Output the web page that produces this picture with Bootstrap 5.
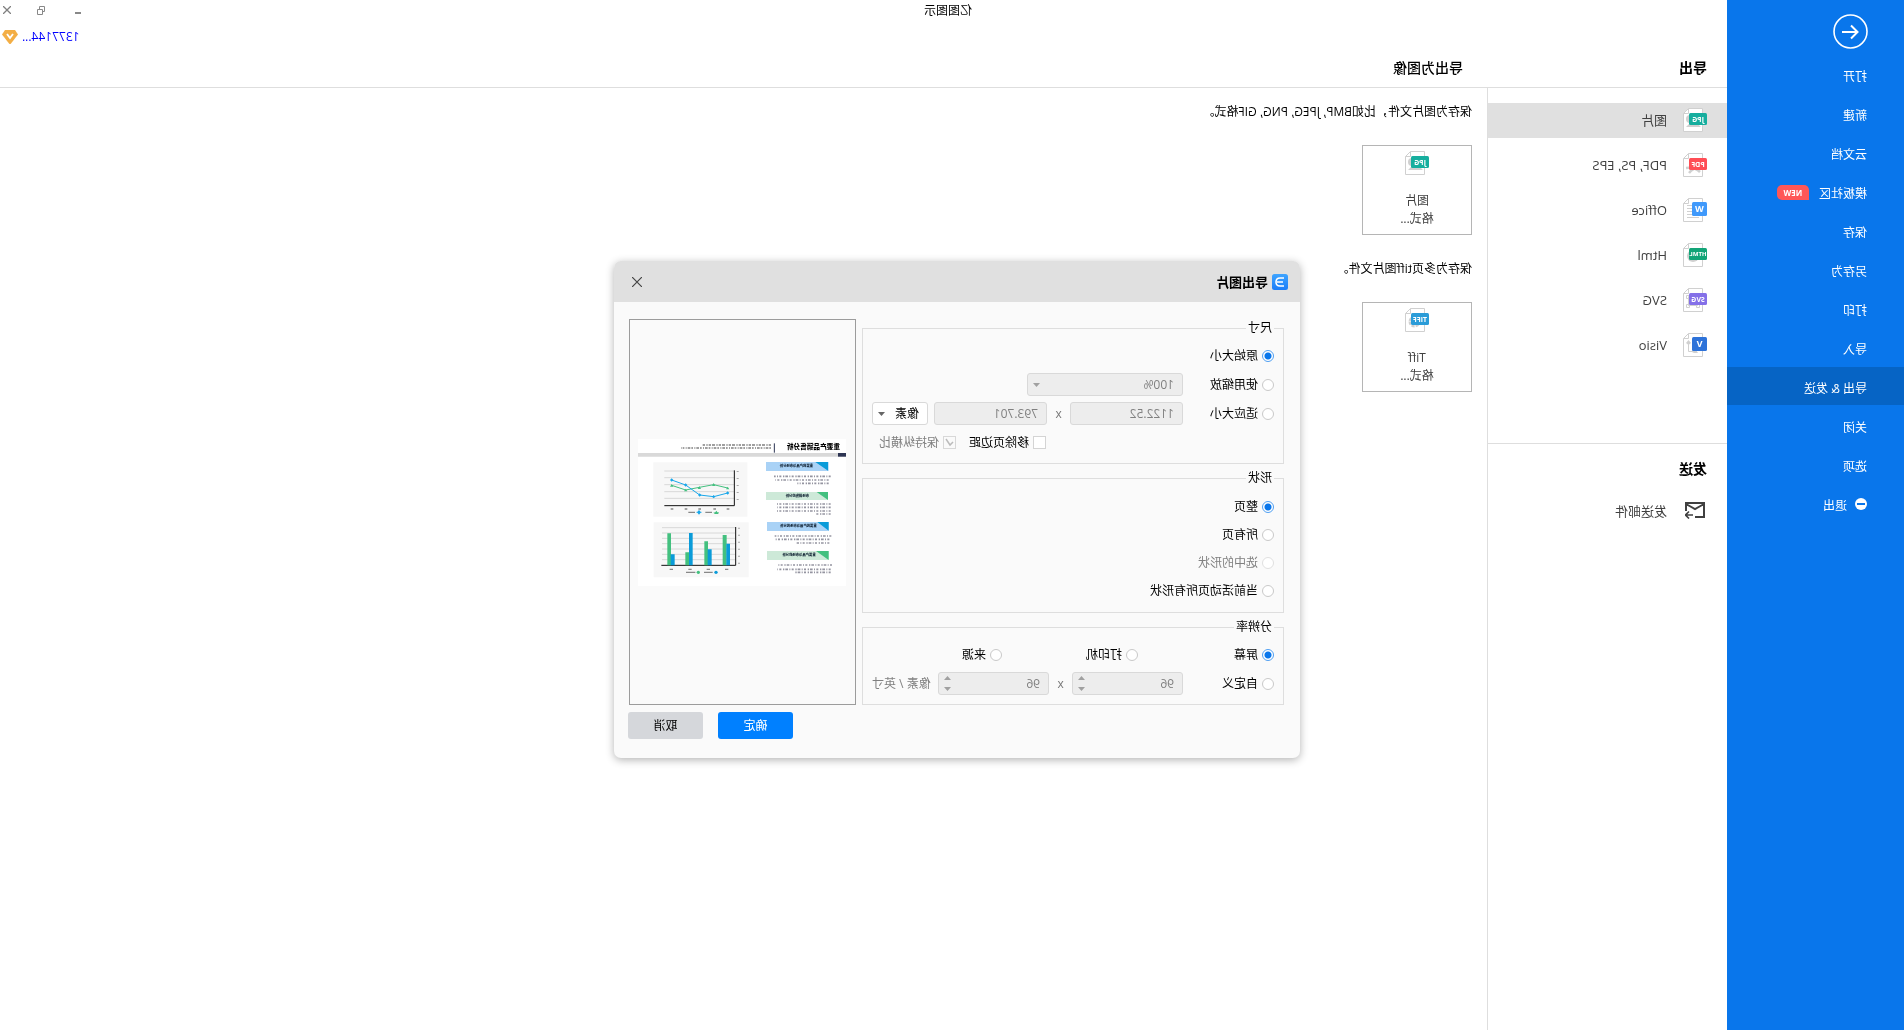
<!DOCTYPE html>
<html lang="zh-CN">
<head>
<meta charset="utf-8">
<meta name="viewport" content="width=device-width, initial-scale=1">
<title>亿图图示</title>
<link href="https://cdn.jsdelivr.net/npm/bootstrap@5.3.0/dist/css/bootstrap.min.css" rel="stylesheet">
<style>
body{font-family:"Open Sans","Noto Sans CJK SC",sans-serif;font-size:12px;line-height:18px;color:#000;background:#fff;overflow-x:hidden}
/* the whole window is shown mirrored */
.window{transform:scaleX(-1);position:relative;min-height:100vh}
.side{width:177px;background:#0976eb;padding-top:14px}
.back{width:35px;height:35px;margin:0 0 6px 36px}
.side a{height:38px;margin-bottom:1px;padding:5px 0 0 37px;color:#fff;text-decoration:none}
.side a.current{background:#0664c5}
.new-tag{font-size:8px;line-height:15px;width:32px;margin:0 0 2px 10px;background:#ff5757;border-radius:5px 5px 5px 0;text-align:center;font-weight:700}
.titlebar{height:20px}
.win-title{padding-top:1px}
.controls{width:169px;padding-right:3px;gap:26px}
.controls svg,.user svg,.back svg,.dlg-head svg{display:block}
.user{height:34px;padding-right:2px}
.user a{color:#00f;text-decoration:none}
.heads{height:34px;padding-bottom:5px;border-bottom:1px solid #dedede;font-size:14px;font-weight:700}
.heads span:first-child{width:264px;padding-left:20px}
.heads span:last-child{font-weight:500}
.formats{width:240px;border-right:1px solid #dedede;padding-top:15px}
.formats a{height:35px;margin-bottom:10px;padding:0 0 2px 20px;gap:16px;font-size:13px;color:#404040;text-decoration:none}
.formats a.current{background:#e0e0e0}
.send{margin-top:80px;border-top:1px solid #dedede;padding-top:15px}
.send h2{font-size:14px;line-height:20px;font-weight:700;margin:0 0 15px 20px}
.send a svg{margin:0 2px}
.content-pane{padding:15px}
.content-pane p{margin:0 0 24px}
.tile{width:110px;height:90px;padding:5px 0 0;border:1px solid #b5b5b5;background:#fff;color:#404040;margin-bottom:25px}
.tile svg{margin-bottom:17px}
.dlg{position:absolute;left:604px;top:261px;width:686px;background:#fafafa;border-radius:7px;box-shadow:0 2px 8px rgba(0,0,0,.3)}
.dlg-head{height:41px;background:#e0e0e0;border-radius:7px 7px 0 0;padding:0 18px 0 12px;font-size:13px;font-weight:700}
.dlg-body{padding:17px 15px 0 16px;gap:6px}
.groups{gap:5px}
.groups fieldset{border:1px solid #dedede;padding:4px 9px 6px}
.groups legend{float:none;width:auto;margin:0;padding:0 2px;font-size:12px;line-height:18px}
.line{height:29px}
.shapes .line{height:28px}
.groups .shapes{padding:6px 9px 7px}
.pick{gap:4px}
.col-label{width:91px}
.col-radio{width:136px}
.times{width:23px;text-align:center;color:#777}
.pick input{appearance:none;width:12px;height:12px;margin:0;border:1px solid #c9c9c9;background:#fff;flex:none}
.pick input[type=radio]{border-radius:50%}
.pick input[type=radio]:checked{border-color:#4f9ff2;background:radial-gradient(circle,#0976eb 0 3px,#fff 4px)}
.pick input[type=checkbox]{width:13px;height:13px}
.pick input[type=checkbox]:enabled{border-color:#d4d4d4}
.pick input:disabled{border-color:#e0e0e0}
.pick input[type=checkbox]:disabled{border-color:#d8d8d8;background:#fafafa url("data:image/svg+xml,%3Csvg xmlns='http://www.w3.org/2000/svg' viewBox='0 0 11 11'%3E%3Cpath d='M2 5l3 3 4-6' fill='none' stroke='%23bbb' stroke-width='1.5'/%3E%3C/svg%3E")}
.dim{color:#808080}
.field{appearance:none;height:23px;padding:0 8px;border:1px solid #d9d9d9;border-radius:3px;background:#fff no-repeat right 5px center;font-size:12px;line-height:18px;color:#000}
.field:disabled{background-color:#ededed;color:#808080;opacity:1}
input[type=number].field{appearance:textfield;-moz-appearance:textfield}
select.field{background-image:url("data:image/svg+xml,%3Csvg xmlns='http://www.w3.org/2000/svg' width='7' height='4'%3E%3Cpath d='M0 0h7L3.500 4z' fill='%23666'/%3E%3C/svg%3E")}
select.field:disabled{background-image:url("data:image/svg+xml,%3Csvg xmlns='http://www.w3.org/2000/svg' width='7' height='4'%3E%3Cpath d='M0 0h7L3.500 4z' fill='%23a0a0a0'/%3E%3C/svg%3E")}
.spin{background-image:url("data:image/svg+xml,%3Csvg xmlns='http://www.w3.org/2000/svg' width='7' height='15'%3E%3Cpath d='M0 4h7L3.500 0zM0 11h7L3.500 15z' fill='%23a0a0a0'/%3E%3C/svg%3E")}
.w-scale{width:156px}.w-size{width:113px}.w-unit{width:56px}.w-dpi{width:111px}
.ratio-line{padding-left:228px;gap:13px}
.preview{width:227px;border:1px solid #9c9c9c}
.preview svg{width:208px;height:147px}
.dlg-foot{padding:7px 14px 19px;gap:15px}
.dlg-foot button{width:75px;height:27px;border:0;border-radius:3px;background:#d5d7db;color:#000}
.dlg-foot .ok{background:#0080ff;color:#fff}
.bare{border:0;background:none;padding:0}
.tag{font:700 7px "Open Sans",sans-serif;fill:#fff;text-anchor:middle}
.tag-app{font-size:9px}
.tag-long{font-size:6px}
.doc-title{font:900 20px "Noto Sans CJK SC",sans-serif}
.doc-head{font:900 10px "Noto Sans CJK SC",sans-serif;fill:#123}
</style>
<script src="https://cdn.jsdelivr.net/npm/bootstrap@5.3.0/dist/js/bootstrap.bundle.min.js"></script>
</head>
<body>
<svg width="0" height="0" class="d-block position-absolute" aria-hidden="true">
  <symbol id="page" viewBox="0 0 24 24"><path d="M4.500.500h14l5 5v18h-19z" fill="#fff" stroke="#d0d0d0"/><path d="M18.500.500v5h5" fill="none" stroke="#d0d0d0"/></symbol>
</svg>
<div class="window d-flex">
  <nav class="side flex-shrink-0 d-flex flex-column">
    <button class="back bare" aria-label="返回"><svg width="35" height="35" fill="none" stroke="#fff" stroke-width="1.600"><circle cx="17.500" cy="17.500" r="16.500"/><path d="M26 18H10.500M17 11.500L10.500 18l6.500 6.500" stroke-width="2"/></svg></button>
    <a href="#" class="d-flex align-items-center">打开</a>
    <a href="#" class="d-flex align-items-center">新建</a>
    <a href="#" class="d-flex align-items-center">云文档</a>
    <a href="#" class="d-flex align-items-center">模板社区<span class="new-tag">NEW</span></a>
    <a href="#" class="d-flex align-items-center">保存</a>
    <a href="#" class="d-flex align-items-center">另存为</a>
    <a href="#" class="d-flex align-items-center">打印</a>
    <a href="#" class="d-flex align-items-center">导入</a>
    <a href="#" class="d-flex align-items-center current">导出 &amp; 发送</a>
    <a href="#" class="d-flex align-items-center">关闭</a>
    <a href="#" class="d-flex align-items-center">选项</a>
    <a href="#" class="d-flex align-items-center"><svg width="12" height="12" class="me-2 mb-1"><circle cx="6" cy="6" r="6" fill="#fff"/><path d="M2 6h8" stroke="#0976eb" stroke-width="2"/></svg>退出</a>
  </nav>
  <div class="flex-grow-1 d-flex flex-column">
    <header>
      <div class="titlebar d-flex align-items-center">
        <div class="win-title flex-grow-1 text-center">亿图图示</div>
        <div class="controls d-flex justify-content-end align-items-center">
          <button class="bare me-1" aria-label="最小化"><svg width="6" height="10"><path d="M0 8h6" stroke="#888" stroke-width="2"/></svg></button>
          <button class="bare" aria-label="还原"><svg width="8" height="9" fill="none" stroke="#888"><path d="M2 5.500H.500v-5h5V3M2.500 3.500h5v5h-5z"/></svg></button>
          <button class="bare" aria-label="关闭"><svg width="8" height="8" stroke="#808080" stroke-width="1.300"><path d="M0 0l8 8M8 0L0 8"/></svg></button>
        </div>
      </div>
      <div class="user d-flex justify-content-end align-items-center">
        <a href="#">1377144...</a>
        <svg width="16" height="14" class="ms-1"><path d="M3 0h10l3 4.500L9 13.500q-1 1-2 0L0 4.500z" fill="#f3ae45"/><path d="M5 4l3 4 3-4" fill="none" stroke="#fff" stroke-width="1.800"/></svg>
      </div>
      <div class="heads d-flex align-items-center"><span>导出</span><span>导出为图像</span></div>
    </header>
    <div class="d-flex flex-grow-1">
      <aside class="formats flex-shrink-0">
        <nav>
          <a href="#" class="d-flex align-items-center current"><svg width="24" height="24"><use href="#page"/><path d="M6 19l5-5 3 3 3-2 4 4z" fill="#d0d0d0"/><circle cx="17" cy="11" r="4" fill="#d0d0d0"/><rect y="5" width="18" height="12" rx="1.500" fill="#16ae9e"/><text class="tag" x="9" y="14">JPG</text></svg>图片</a>
          <a href="#" class="d-flex align-items-center"><svg width="24" height="24"><use href="#page"/><path d="M7 19q5-5 14-4M10 15q4 0 8 5" fill="none" stroke="#d0d0d0" stroke-width="2.500"/><rect y="5" width="18" height="12" rx="1.500" fill="#ff4d55"/><text class="tag" x="9" y="14">PDF</text></svg>PDF, PS, EPS</a>
          <a href="#" class="d-flex align-items-center"><svg width="24" height="24"><use href="#page"/><path d="M13 7.500h7M13 10.500h7M13 13.500h7M8 16.500h12M8 19.500h12" stroke="#d0d0d0"/><rect y="4" width="15" height="14" rx="1.500" fill="#3f99fb"/><text class="tag tag-app" x="7.500" y="14">W</text></svg>Office</a>
          <a href="#" class="d-flex align-items-center"><svg width="24" height="24"><use href="#page"/><circle cx="14" cy="13" r="6" fill="#d0d0d0"/><rect y="5" width="18" height="12" rx="1.500" fill="#12a477"/><text class="tag tag-long" x="9" y="13">HTML</text></svg>Html</a>
          <a href="#" class="d-flex align-items-center"><svg width="24" height="24"><use href="#page"/><path d="M9.500 8.500h9v9h-9zM7.500 16.500h3v3h-3zM17.500 16.500h3v3h-3zM17.500 7.500h3v3h-3z" fill="none" stroke="#d0d0d0"/><rect y="5" width="18" height="12" rx="1.500" fill="#8470e8"/><text class="tag" x="9" y="14">SVG</text></svg>SVG</a>
          <a href="#" class="d-flex align-items-center"><svg width="24" height="24"><use href="#page"/><path d="M18.500 9v9.500H12" fill="none" stroke="#d0d0d0"/><path d="M18.500 7l2.500 3-2.500 2-2.500-2zM13 16l3 2.500-3 1.500h-4l2-3z" fill="#d0d0d0"/><rect y="4" width="15" height="14" rx="1.500" fill="#2d72d9"/><text class="tag tag-app" x="7.500" y="14">V</text></svg>Visio</a>
        </nav>
        <section class="send">
          <h2>发送</h2>
          <a href="#" class="d-flex align-items-center"><svg width="20" height="17" fill="none" stroke="#404040" stroke-width="2"><path d="M10 15H1V1h18v8M1 2l9 5 9-5"/><path d="M12 13h7M16 9.500l3.500 3.500-3.500 3.500" stroke-width="1.600"/></svg>发送邮件</a>
        </section>
      </aside>
      <main class="content-pane flex-grow-1">
        <p>保存为图片文件，比如BMP, JPEG, PNG, GIF格式。</p>
        <button class="tile d-flex flex-column align-items-center"><svg width="24" height="24"><use href="#page"/><path d="M6 19l5-5 3 3 3-2 4 4z" fill="#d0d0d0"/><circle cx="17" cy="11" r="4" fill="#d0d0d0"/><rect y="5" width="18" height="12" rx="1.500" fill="#16ae9e"/><text class="tag" x="9" y="14">JPG</text></svg><span>图片</span><span>格式...</span></button>
        <p>保存为多页tiff图片文件。</p>
        <button class="tile d-flex flex-column align-items-center"><svg width="24" height="24"><use href="#page"/><circle cx="14.500" cy="13.500" r="4.500" fill="none" stroke="#d0d0d0" stroke-width="3" stroke-dasharray="3 1"/><rect y="5" width="18" height="12" rx="1.500" fill="#2b9cd8"/><text class="tag" x="9" y="14">TIFF</text></svg><span>Tiff</span><span>格式...</span></button>
      </main>
    </div>
  </div>

  <div class="dlg" role="dialog" aria-labelledby="dlg-title">
    <div class="dlg-head d-flex align-items-center justify-content-between">
      <div class="d-flex align-items-center"><svg width="16" height="16" class="me-1"><defs><linearGradient id="lg" x1="0" x2="0" y1="0" y2="1"><stop stop-color="#3fa5ff"/><stop offset="1" stop-color="#1a7cf8"/></linearGradient></defs><rect width="16" height="16" rx="2.500" fill="url(#lg)"/><path d="M4 4h4q4 0 4 4t-4 4H4M5 8h6" fill="none" stroke="#fff" stroke-width="1.600"/></svg><span id="dlg-title">导出图片</span></div>
      <button class="bare" aria-label="关闭"><svg width="10" height="10" stroke="#444" stroke-width="1.200"><path d="M0 0l10 10M10 0L0 10"/></svg></button>
    </div>
    <div class="dlg-body d-flex">
      <div class="groups flex-grow-1 d-flex flex-column">
        <fieldset>
          <legend>尺寸</legend>
          <div class="line d-flex align-items-center"><label class="pick d-flex align-items-center"><input type="radio" name="size" checked>原始大小</label></div>
          <div class="line d-flex align-items-center"><label class="pick col-label d-flex align-items-center"><input type="radio" name="size">使用缩放</label><select class="field w-scale" aria-label="缩放" disabled><option>100%</option></select></div>
          <div class="line d-flex align-items-center"><label class="pick col-label d-flex align-items-center"><input type="radio" name="size">适应大小</label><input class="field w-size" aria-label="宽度" value="1122.52" disabled><span class="times">x</span><input class="field w-size" aria-label="高度" value="793.701" disabled><select class="field w-unit ms-auto" aria-label="单位"><option>像素</option></select></div>
          <div class="line ratio-line d-flex align-items-center"><label class="pick d-flex align-items-center"><input type="checkbox">移除页边距</label><label class="pick dim d-flex align-items-center"><input type="checkbox" checked disabled>保持纵横比</label></div>
        </fieldset>
        <fieldset class="shapes">
          <legend>形状</legend>
          <div class="line d-flex align-items-center"><label class="pick d-flex align-items-center"><input type="radio" name="shape" checked>整页</label></div>
          <div class="line d-flex align-items-center"><label class="pick d-flex align-items-center"><input type="radio" name="shape">所有页</label></div>
          <div class="line d-flex align-items-center"><label class="pick dim d-flex align-items-center"><input type="radio" name="shape" disabled>选中的形状</label></div>
          <div class="line d-flex align-items-center"><label class="pick d-flex align-items-center"><input type="radio" name="shape">当前活动页所有形状</label></div>
        </fieldset>
        <fieldset>
          <legend>分辨率</legend>
          <div class="line d-flex align-items-center"><label class="pick col-radio d-flex align-items-center"><input type="radio" name="dpi" checked>屏幕</label><label class="pick col-radio d-flex align-items-center"><input type="radio" name="dpi">打印机</label><label class="pick d-flex align-items-center"><input type="radio" name="dpi">来源</label></div>
          <div class="line d-flex align-items-center"><label class="pick col-label d-flex align-items-center"><input type="radio" name="dpi">自定义</label><input type="number" class="field spin w-dpi" aria-label="水平分辨率" value="96" disabled><span class="times">x</span><input type="number" class="field spin w-dpi" aria-label="垂直分辨率" value="96" disabled><span class="dim ms-auto">像素 / 英寸</span></div>
        </fieldset>
      </div>
      <div class="preview flex-shrink-0 d-flex align-items-center justify-content-center">
        <svg viewBox="0 0 624 441" role="img" aria-label="预览">
          <path fill="#fff" d="M0 0h624v441H0z"/>
          <text class="doc-title" x="18" y="31">重要产品销售分析</text>
          <path d="M215 13v28" stroke="#2d3553" stroke-width="3"/>
          <g stroke="#555" stroke-width="5" fill="none" opacity=".75"><path d="M225 18h205" stroke-dasharray="7 3 4 4 9 3"/><path d="M225 27h270" stroke-dasharray="5 3 8 3 3 4"/></g>
          <path fill="#d9d9d9" d="M0 42h624v11H0z"/><path fill="#2d3553" d="M0 42h24v11H0z"/>
          <g><path fill="#a9d2f6" d="M52 69h188v27H52zM52 249h185v27H52z"/><path fill="#cde9d8" d="M54 159h186v24H54zM52 336h185v27H52z"/><path fill="#0a9bd9" d="M54 69h38L54 95zM52 249h34L52 275z"/><path fill="#43c07f" d="M54 159h34L54 183zM52 336h38L52 363z"/></g>
          <g class="doc-head"><text x="99" y="84">重要的产品与市场分析</text><text x="111" y="174">市场销售的分析</text><text x="88" y="264">重要的产品与市场的分析</text><text x="91" y="351">重要产品与市场的分析</text></g>
          <g stroke="#667" stroke-width="5" opacity=".7" fill="none" stroke-dasharray="6 4 3 4 8 3 4 5"><path d="M46 112h170M52 123h160M52 133h94M46 195h165M46 205h160M46 216h165M46 225h46M44 291h170M50 301h162M50 312h98M42 378h165M46 391h160M46 400h110"/></g>
          <path fill="#f7f7f7" d="M296 70h282v163H296zM292 250h285v165H292z"/>
          <path d="M335 96h210M335 116h210M335 137h210M335 158h210M335 178h210M332 266h220M332 282h220M332 298h220M332 314h220M332 330h220M332 346h220M332 362h220" stroke="#d8d8d8" stroke-width="3"/>
          <path d="M335 94v106h210M331 264v115h223" fill="none" stroke="#111" stroke-width="3"/>
          <path d="M355 147l42-10 43 8 41 8 42-14" fill="none" stroke="#43c07f" stroke-width="3"/>
          <path d="M355 162l42 11 42-5 42-30 42-15" fill="none" stroke="#19a7ea" stroke-width="3"/>
          <path d="M355 143l5 8h-10zM397 132l5 9h-10zM440 141l5 9h-10zM481 149l5 8h-10zM523 135l5 8h-10zM389 215l7 10h-14z" fill="#43c07f"/>
          <path d="M355 157l5 5-5 5-5-5zM397 168l5 5-5 5-5-5zM439 163l5 5-5 5-5-5zM481 133l5 5-5 5-5-5zM523 118l5 5-5 5-5-5zM441 213l6 7-6 7-6-7z" fill="#19a7ea"/>
          <path d="M381 221h16" stroke="#43c07f" stroke-width="2"/><path d="M433 220h16" stroke="#19a7ea" stroke-width="2"/>
          <path fill="#43c07f" d="M358 288h12v91h-12zM414 307h11v72h-11zM471 340h11v39h-11zM525 283h11v96h-11z"/>
          <path fill="#0a9bd9" d="M348 314h11v65h-11zM403 331h12v48h-12zM460 282h11v97h-11zM514 346h12v33h-12z"/>
          <circle cx="443" cy="400" r="5" fill="#43c07f"/><circle cx="390" cy="400" r="5" fill="#0a9bd9"/>
          <g stroke="#888" stroke-width="4" fill="none"><path d="M402 220h20M453 220h20M400 400h26M452 400h28M350 210h8M390 210h8M435 210h8M476 210h8M518 210h8M353 391h10M408 391h10M463 391h10M519 391h10"/><path d="M325 96v105M321 266v112" stroke-width="6" stroke-dasharray="3 18" opacity=".7"/></g>
        </svg>
      </div>
    </div>
    <div class="dlg-foot d-flex justify-content-end"><button class="ok">确定</button><button>取消</button></div>
  </div>
</div>
</body>
</html>
